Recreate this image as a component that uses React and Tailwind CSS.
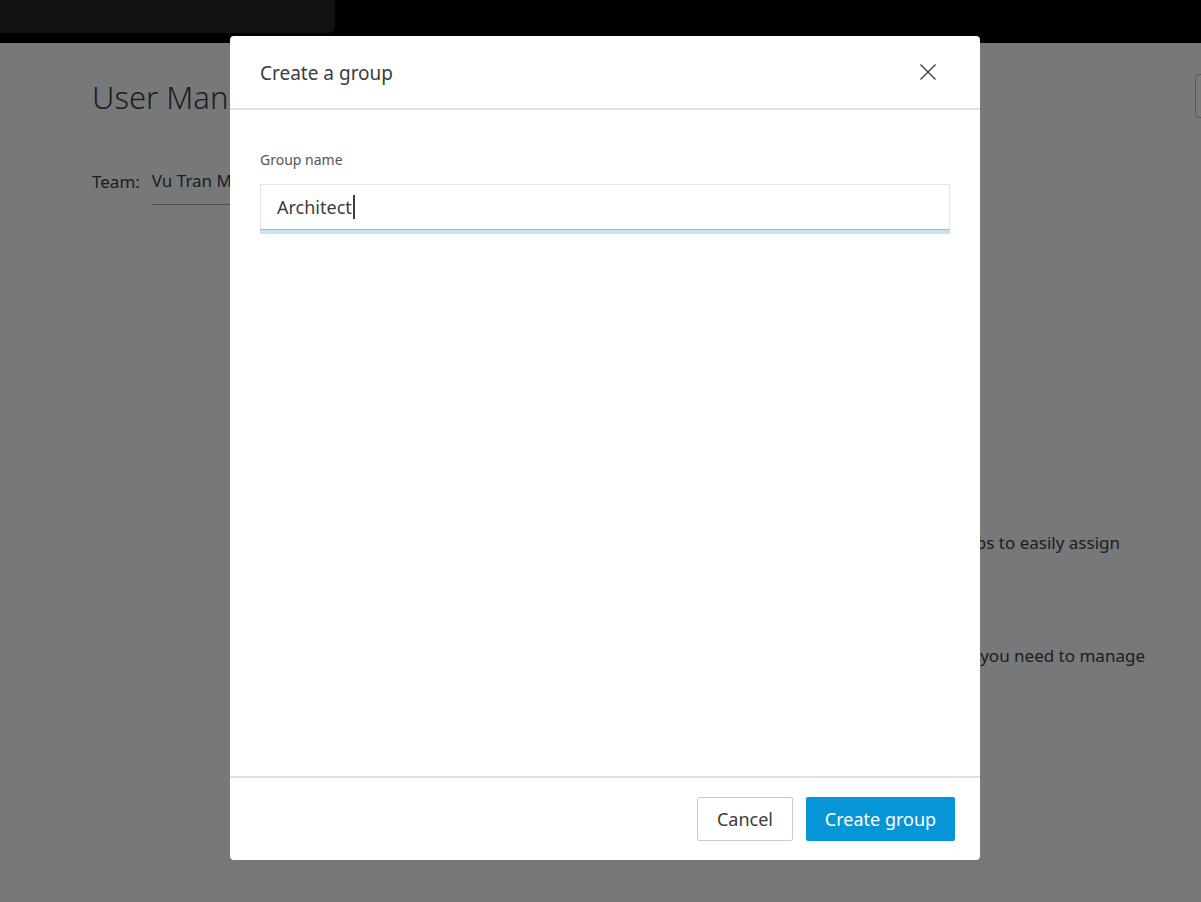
import { useState } from 'react';

const font = { fontFamily: '"Noto Sans", "Open Sans", Arial, sans-serif' };

const CloseIcon = () => (
  <svg width="18" height="18" viewBox="0 0 18 18" fill="none" stroke="#3c3c3c" strokeWidth="1.4">
    <path d="M1.5 1.5 L16.5 16.5 M16.5 1.5 L1.5 16.5" />
  </svg>
);

// page behind the dialog
const BackgroundPage = () => (
  <div className="flex flex-col h-[902px] bg-[#eef0f4]">
    <div className="h-[43px] bg-black shrink-0">
      <div className="w-[335px] h-[33px] bg-[#222] rounded-br-md" />
    </div>
    <div className="flex-1 pl-[92px] pt-[34px]">
      <div className="flex items-start justify-between">
        <h1 className="w-[138px] overflow-hidden whitespace-nowrap text-[31px] font-light text-[#3c3c3c] leading-[40px]">
          User Management
        </h1>
        <div className="w-[60px] h-[44px] mr-[-54px] border border-[#aaa] rounded-sm mt-[-3px]" />
      </div>
      <div className="flex items-end mt-[50px] text-[17px] text-[#3c3c3c]">
        <span className="mr-3 pb-[10px]">Team:</span>
        <span className="w-[78px] overflow-hidden whitespace-nowrap pb-[10px] border-b border-[#999]">Vu Tran Minh</span>
      </div>
      <div className="flex flex-col items-end mt-[325px] text-[17px] text-[#3c3c3c]">
        <p className="pr-[81px] whitespace-nowrap">Create groups to easily assign</p>
        <p className="pr-[56px] mt-[88px] whitespace-nowrap">Add all the people you need to manage</p>
      </div>
    </div>
  </div>
);

export default function App() {
  const [name] = useState('Architect');

  return (
    <div className="relative w-[1201px] h-[902px] overflow-hidden" style={font}>
      <BackgroundPage />
      <div className="absolute inset-0 bg-black/50" />

      <div className="absolute left-[230px] top-[36px] w-[750px] h-[824px] bg-white rounded-[4px] flex flex-col">
        <div className="h-[74px] shrink-0 flex items-center justify-between pl-[30px] pr-[43px] border-b-2 border-[#e0e0e0]">
          <h2 className="text-[19px] text-[#3c3c3c] pt-[2px]">Create a group</h2>
          <button className="p-0">
            <CloseIcon />
          </button>
        </div>

        <div className="flex-1 px-[30px] pt-[40px]">
          <div className="text-[14px] text-[#555] leading-[20px]">Group name</div>
          <div className="mt-[14px]">
            <div className="h-[45px] px-[16px] flex items-center border border-[#e6e6e6] border-b-0">
              <span className="text-[18px] text-[#3c3c3c]">{name}</span>
              <span className="w-[2px] h-[24px] bg-[#3c3c3c] ml-[1px]" />
            </div>
            <div className="h-[5px] bg-[#c7e5f6] border-t border-[#80c5e6]" />
          </div>
        </div>

        <div className="h-[84px] shrink-0 border-t-2 border-[#e0e0e0] flex items-center justify-end gap-[13px] pr-[25px]">
          <button className="w-[96px] h-[44px] border border-[#cccccc] rounded-[2px] text-[18px] text-[#3c3c3c] bg-white">
            Cancel
          </button>
          <button className="w-[149px] h-[44px] rounded-[2px] text-[18px] text-white bg-[#0696d7]">
            Create group
          </button>
        </div>
      </div>
    </div>
  );
}
